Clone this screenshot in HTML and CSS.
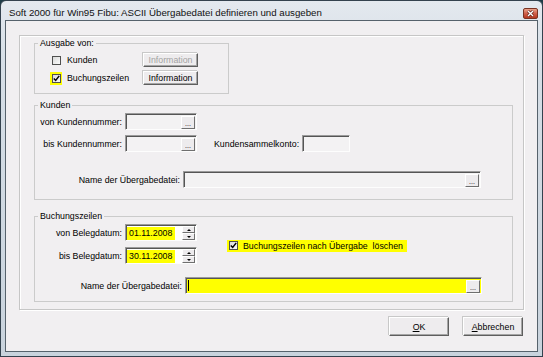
FILE: index.html
```html
<!DOCTYPE html>
<html lang="de">

<head>
    <meta charset="UTF-8">
    <title>ASCII Übergabedatei</title>
    <link rel="stylesheet" href="styles.css">
</head>

<body>
    <div class="window">
        <div class="titlebar">
            <span class="caption">Soft 2000 für Win95 Fibu: ASCII Übergabedatei definieren und ausgeben</span>
            <span class="close">
                <svg width="9" height="7" viewBox="0 0 9 7">
                    <path d="M2 1 L7 6 M7 1 L2 6" stroke="#5a1a10" stroke-width="2.6" />
                    <path d="M2 1 L7 6 M7 1 L2 6" stroke="#fff" stroke-width="1.4" />
                </svg>
            </span>
        </div>
        <div class="client">
            <div class="frame">
                <fieldset class="group group-ausgabe">
                    <legend>Ausgabe von:</legend>
                    <div class="opt-grid">
                        <label class="chk"><span class="mark"><span class="box"></span></span>Kunden</label>
                        <span class="btn btn-info disabled">Information</span>
                        <label class="chk"><span class="mark on"><span class="box"><svg width="7" height="7" viewBox="0 0 7 7"><path d="M0.8 3.4 L2.7 5.4 L6.2 0.9" stroke="#000" stroke-width="1.5" fill="none" /></svg></span></span>Buchungszeilen</label>
                        <span class="btn btn-info">Information</span>
                    </div>
                </fieldset>

                <fieldset class="group group-kunden">
                    <legend>Kunden</legend>
                    <div class="row">
                        <span class="lbl lbl-short">von Kundennummer:</span>
                        <span class="field field-num"><span class="dots">...</span></span>
                    </div>
                    <div class="row row-next">
                        <span class="lbl lbl-short">bis Kundennummer:</span>
                        <span class="field field-num"><span class="dots">...</span></span>
                        <span class="lbl lbl-konto">Kundensammelkonto:</span>
                        <span class="field field-konto"></span>
                    </div>
                    <div class="row row-name">
                        <span class="lbl lbl-name">Name der Übergabedatei:</span>
                        <span class="field field-name"><span class="dots">...</span></span>
                    </div>
                </fieldset>

                <fieldset class="group group-buchung">
                    <legend>Buchungszeilen</legend>
                    <div class="date-block">
                        <div class="dates">
                            <div class="row">
                                <span class="lbl lbl-short">von Belegdatum:</span>
                                <span class="field field-date"><span class="val">01.11.2008</span><span class="spin"><span class="up"></span><span class="down"></span></span></span>
                            </div>
                            <div class="row row-date">
                                <span class="lbl lbl-short">bis Belegdatum:</span>
                                <span class="field field-date"><span class="val">30.11.2008</span><span class="spin"><span class="up"></span><span class="down"></span></span></span>
                            </div>
                        </div>
                        <label class="chk chk-loeschen"><span class="box"><svg width="7" height="7" viewBox="0 0 7 7"><path d="M0.8 3.4 L2.7 5.4 L6.2 0.9" stroke="#000" stroke-width="1.5" fill="none" /></svg></span>Buchungszeilen nach Übergabe&nbsp; löschen</label>
                    </div>
                    <div class="row row-file">
                        <span class="lbl lbl-file">Name der Übergabedatei:</span>
                        <span class="field field-file"><span class="caret"></span><span class="dots">...</span></span>
                    </div>
                </fieldset>
            </div>

            <div class="actions">
                <span class="btn btn-main"><u>O</u>K</span>
                <span class="btn btn-main"><u>A</u>bbrechen</span>
            </div>
        </div>
    </div>
</body>

</html>
```

FILE: styles.css
```css
* {
    margin: 0;
    padding: 0;
    box-sizing: border-box;
}

body {
    width: 543px;
    height: 357px;
    background: #1f3d48;
    font-family: "Liberation Sans", Arial, sans-serif;
    font-size: 8.8px;
    color: #000;
}

.window {
    width: 543px;
    height: 357px;
    border: 1px solid #34424e;
    border-radius: 6px 6px 0 0;
    padding: 0 4px 4px;
    background: linear-gradient(#e4e9ef, #d6dee6 60px, #c9d3dd);
    display: flex;
    flex-direction: column;
}

.titlebar {
    height: 19px;
    display: flex;
    justify-content: space-between;
    align-items: flex-start;
}

.caption {
    font-size: 9.7px;
    line-height: 12px;
    padding: 6px 0 0 4px;
    color: #111;
}

.close {
    width: 15px;
    height: 11px;
    margin-top: 7px;
    border: 1px solid #7a3322;
    border-radius: 2px;
    background: linear-gradient(#eba48c, #d0604a 50%, #b5381f);
    display: flex;
    align-items: center;
    justify-content: center;
}

.client {
    flex: 1;
    border: 1px solid #56626c;
    background: #f1eff1;
    padding: 14px 14px 0 13px;
}

/* big etched frame */
.frame {
    width: 505px;
    height: 275px;
    border: 1px solid #c6c6c6;
    box-shadow: inset 1px 1px #fff, 1px 1px #fff;
    padding: 2px 10px 0 14px;
}

.group {
    border: 1px solid #cbcbcb;
    min-width: 0;
}

.group legend {
    line-height: 10px;
    margin-left: 3px;
    padding: 0 2px;
}

.group-ausgabe {
    width: 195px;
    padding: 5px 0 8px 0;
}

.group-kunden {
    width: 479px;
    margin-top: 6px;
    padding: 3px 0 11px 0;
}

.group-buchung {
    width: 479px;
    margin-top: 11px;
    padding: 3px 0 7px 0;
}

.opt-grid {
    display: grid;
    grid-template-columns: 93px 55px;
    grid-auto-rows: 14px;
    row-gap: 4px;
    align-items: center;
    margin-left: 15px;
}

.chk {
    display: flex;
    align-items: center;
}

.mark {
    padding: 2px 1px 2px 2px;
    margin-right: 5px;
}

.mark.on {
    background: #ffff00;
}

.box {
    width: 9px;
    height: 9px;
    border: 1px solid #4f4f4f;
    background: linear-gradient(135deg, #d9d9d9, #fbfbfb);
    display: flex;
    align-items: center;
    justify-content: center;
}

.btn {
    display: flex;
    align-items: center;
    justify-content: center;
    background: #eeecee;
    border: 1px solid;
    border-color: #fff #5e5e5e #5e5e5e #fff;
    box-shadow: inset -1px -1px #a5a5a5, -1px -1px #c8c8c8;
}

.btn-info {
    height: 14px;
    width: 55px;
}

.btn.disabled {
    color: #a3a3a3;
}

.row {
    display: flex;
    align-items: center;
    height: 17px;
}

.row-next {
    margin-top: 5px;
}

.row-name {
    margin-top: 19px;
}

.lbl {
    text-align: right;
    margin-right: 3px;
    white-space: nowrap;
}

.lbl-short {
    width: 87px;
}

.lbl-konto {
    margin-left: 17px;
}

.lbl-name {
    width: 145px;
}

.lbl-file {
    width: 147px;
}

.field {
    height: 17px;
    display: flex;
    align-items: center;
    justify-content: flex-end;
    padding-right: 1px;
    background: #f3f2f3;
    border: 1px solid;
    border-color: #9b9b9b #fdfdfd #fdfdfd #9b9b9b;
    box-shadow: inset 1px 1px #555;
}

.field-num {
    width: 72px;
}

.field-konto {
    width: 48px;
}

.field-name {
    width: 298px;
}

.dots {
    width: 14px;
    height: 13px;
    margin-top: 1px;
    font-size: 7px;
    line-height: 13px;
    text-align: center;
    background: #edebed;
    border: 1px solid;
    border-color: #fff #6f6f6f #6f6f6f #fff;
}

.date-block {
    display: flex;
    align-items: center;
}

.row-date {
    margin-top: 6px;
}

.field-date {
    width: 72px;
    background: #fff;
    justify-content: space-between;
}

.val {
    background: #ffff00;
    padding: 0 3px 0 2px;
    margin-left: 1px;
    line-height: 13px;
    margin-top: 1px;
}

.spin {
    width: 13px;
    height: 14px;
    margin-top: 1px;
    display: flex;
    flex-direction: column;
}

.spin span {
    flex: 1;
    background: #edebed;
    border: 1px solid;
    border-color: #fff #6f6f6f #6f6f6f #fff;
    display: flex;
    align-items: center;
    justify-content: center;
}

.spin .up::after,
.spin .down::after {
    content: "";
    border-left: 2px solid transparent;
    border-right: 2px solid transparent;
}

.spin .up::after {
    border-bottom: 2px solid #000;
}

.spin .down::after {
    border-top: 2px solid #000;
}

.chk-loeschen {
    margin-left: 30px;
    margin-top: 3px;
    background: #ffff00;
    padding: 1px 4px 1px 2px;
    height: 12px;
}

.chk-loeschen .box {
    margin-right: 5px;
}

.row-file {
    margin-top: 13px;
}

.field-file {
    width: 297px;
    background: #ffff00;
    justify-content: space-between;
}

.caret {
    width: 1px;
    height: 11px;
    margin-left: 2px;
    background: #000;
}

.actions {
    display: flex;
    justify-content: flex-end;
    gap: 14px;
    margin-top: 7px;
}

.btn-main {
    width: 60px;
    height: 19px;
}
```
